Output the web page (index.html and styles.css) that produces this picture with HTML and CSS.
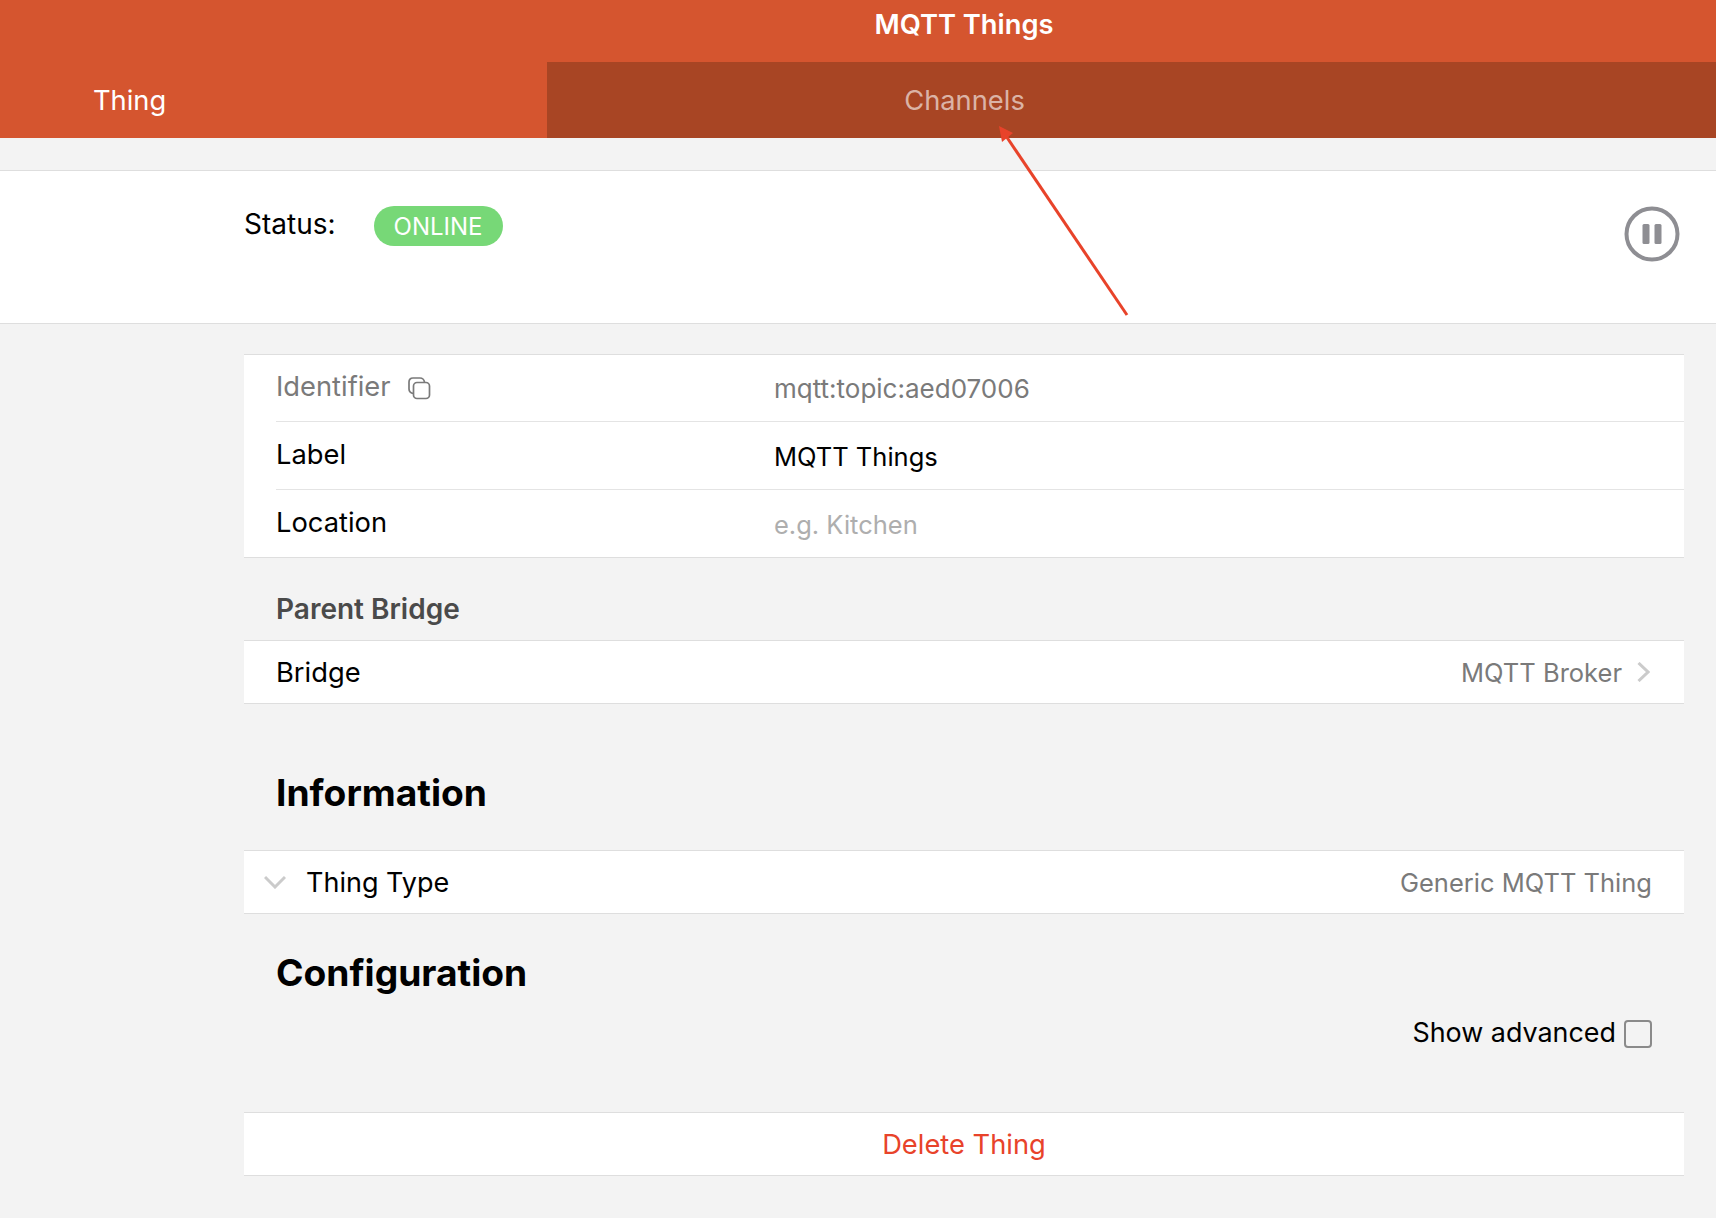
FILE: index.html
```html
<!DOCTYPE html>
<html lang="en">
<head>
<meta charset="utf-8">
<title>MQTT Things</title>
<link rel="stylesheet" href="styles.css">
</head>
<body>
<header class="header">
  <div class="title">MQTT Things</div>
  <nav class="tabs">
    <div class="tab tab-active">Thing</div>
    <div class="tab tab-inactive">Channels</div>
  </nav>
</header>
<svg class="annotation" width="1716" height="1218" viewBox="0 0 1716 1218" aria-hidden="true">
  <line x1="1127" y1="315" x2="1006" y2="136" stroke="#e8432a" stroke-width="3"/>
  <polygon points="999,126 1013,133 1002,142" fill="#e8432a"/>
</svg>
<section class="status-bar">
  <div class="status-inner">
    <span class="status-label">Status:</span>
    <span class="badge">ONLINE</span>
  </div>
  <svg class="pause" width="56" height="56" viewBox="0 0 56 56" aria-hidden="true">
    <circle cx="28" cy="28" r="25.5" fill="none" stroke="#8e8e93" stroke-width="4"/>
    <rect x="18.500" y="18" width="7" height="20" rx="1.5" fill="#8e8e93"/>
    <rect x="30.500" y="18" width="7" height="20" rx="1.5" fill="#8e8e93"/>
  </svg>
</section>
<main class="content">
  <div class="card card-props">
    <div class="row row-first"><div class="row-inner">
      <span class="prop-key muted">Identifier
        <svg class="copy" width="24" height="24" viewBox="0 0 24 24" aria-hidden="true">
          <path d="M6.500 17.500C3.500 17 2 15.500 2 13V6C2 3.500 3.500 2 6 2H13C15.500 2 17 3.500 17.500 6" fill="none" stroke="#7a7a7a" stroke-width="1.700"/>
          <rect x="6.500" y="6.500" width="16" height="16" rx="3.500" fill="none" stroke="#7a7a7a" stroke-width="1.700"/>
        </svg>
      </span>
      <span class="prop-val muted">mqtt:topic:aed07006</span>
    </div></div>
    <div class="row"><div class="row-inner">
      <span class="prop-key">Label</span>
      <span class="prop-val value-narrow">MQTT Things</span>
    </div></div>
    <div class="row"><div class="row-inner">
      <span class="prop-key">Location</span>
      <span class="prop-val value-narrow placeholder">e.g. Kitchen</span>
    </div></div>
  </div>
  <h3 class="subhead">Parent Bridge</h3>
  <div class="card line">
    <span class="line-start">Bridge</span>
    <span class="line-end value-narrow muted">MQTT Broker
      <svg class="chev" width="13" height="20" viewBox="0 0 13 20" aria-hidden="true"><path d="M1.500 1L11 10L1.500 19" fill="none" stroke="#cbcbcb" stroke-width="3"/></svg>
    </span>
  </div>
  <h2 class="heading heading-info">Information</h2>
  <div class="card line line-type">
    <span class="line-start type-left">
      <svg class="chev-down" width="22" height="14" viewBox="0 0 22 14" aria-hidden="true"><path d="M1 2L11 12L21 2" fill="none" stroke="#cbcbcb" stroke-width="3"/></svg>
      Thing Type
    </span>
    <span class="value-narrow muted">Generic MQTT Thing</span>
  </div>
  <h2 class="heading heading-config">Configuration</h2>
  <div class="advanced">
    <span>Show advanced</span>
    <span class="checkbox"></span>
  </div>
  <div class="card delete">Delete Thing</div>
</main>
</body>
</html>
```
FILE: styles.css
```css
* { box-sizing: border-box; }
html, body { margin: 0; padding: 0; }
body {
  position: relative;
  width: 1716px;
  height: 1218px;
  overflow: hidden;
  background: #f3f3f3;
  color: #000;
  font-family: Inter, "Liberation Sans", sans-serif;
  font-size: 26px;
}
.header { background: #d5552f; color: #fff; }
.title {
  height: 62px;
  padding: 8px 0 0 212px;
  text-align: center;
  font-size: 27.300px;
  font-weight: 600;
  line-height: 34px;
}
.tabs { display: grid; grid-template-columns: 547px 1fr; height: 76px; font-size: 27.300px; }
.tab { display: flex; align-items: center; line-height: 34px; padding-top: 2px; }
.tab-active { padding-left: 93px; }
.tab-inactive {
  background: #a84524;
  color: rgba(255, 255, 255, 0.6);
  justify-content: center;
  padding-right: 334px;
}
.annotation { position: absolute; left: 0; top: 0; z-index: 2; pointer-events: none; }
.status-bar {
  margin-top: 32px;
  height: 154px;
  background: #fff;
  border-top: 1px solid #dedede;
  border-bottom: 1px solid #dedede;
  padding: 35px 36px 0 244px;
  display: flex;
  justify-content: space-between;
  align-items: flex-start;
}
.status-inner { display: flex; align-items: flex-start; gap: 38px; }
.status-label { line-height: 36px; font-size: 28px; }
.badge {
  width: 129px;
  height: 40px;
  border-radius: 20px;
  background: #77d877;
  color: #fff;
  font-size: 24px;
  line-height: 42px;
  text-align: center;
}
.content { padding: 30px 32px 0 244px; }
.card {
  background: #fff;
  border-top: 1px solid #dedede;
  border-bottom: 1px solid #dedede;
}
.row { padding-left: 32px; }
.row + .row .row-inner { border-top: 1px solid #e4e4e4; }
.row-inner { display: flex; height: 68px; align-items: center; }
.row-first .row-inner { height: 66px; }
.prop-key { width: 498px; display: flex; align-items: center; gap: 16px; padding-bottom: 2px; font-size: 27.300px; }
.row-first .prop-key { padding-bottom: 4px; }
.prop-val { padding-top: 2px; }
.row-first .prop-val { padding-top: 1px; }
.value-narrow { font-size: 25.500px; }
.muted { color: #7a7a7a; }
.placeholder { color: #aeaeae; }
.copy { margin-top: 4px; }
.subhead {
  margin: 0;
  padding: 34px 0 0 32px;
  height: 82px;
  font-size: 28px;
  font-weight: 600;
  line-height: 34px;
  color: #4a4a4a;
}
.line {
  height: 64px;
  padding: 0 32px;
  display: flex;
  justify-content: space-between;
  align-items: center;
}
.line-start { font-size: 27.300px; }
.line-end { display: flex; align-items: center; gap: 15px; margin-right: 2px; }
.heading {
  margin: 0;
  padding-left: 32px;
  font-size: 37.200px;
  font-weight: 700;
  line-height: 46px;
}
.heading-info { padding-top: 66px; height: 146px; }
.line-type { padding-left: 21px; }
.type-left { display: flex; align-items: center; gap: 20px; font-size: 27px; }
.chev-down { margin-left: -1px; }
.heading-config { padding-top: 36px; height: 93px; }
.advanced {
  height: 105px;
  padding: 9px 32px 0 0;
  display: flex;
  justify-content: flex-end;
  align-items: flex-start;
  gap: 8px;
  font-size: 26.900px;
}
.checkbox {
  width: 28px;
  height: 28px;
  margin-top: 4px;
  border: 2px solid #8a8a8a;
  border-radius: 4px;
}
.delete {
  height: 64px;
  display: flex;
  justify-content: center;
  align-items: center;
  color: #e8432a;
  font-size: 27.300px;
}
```
